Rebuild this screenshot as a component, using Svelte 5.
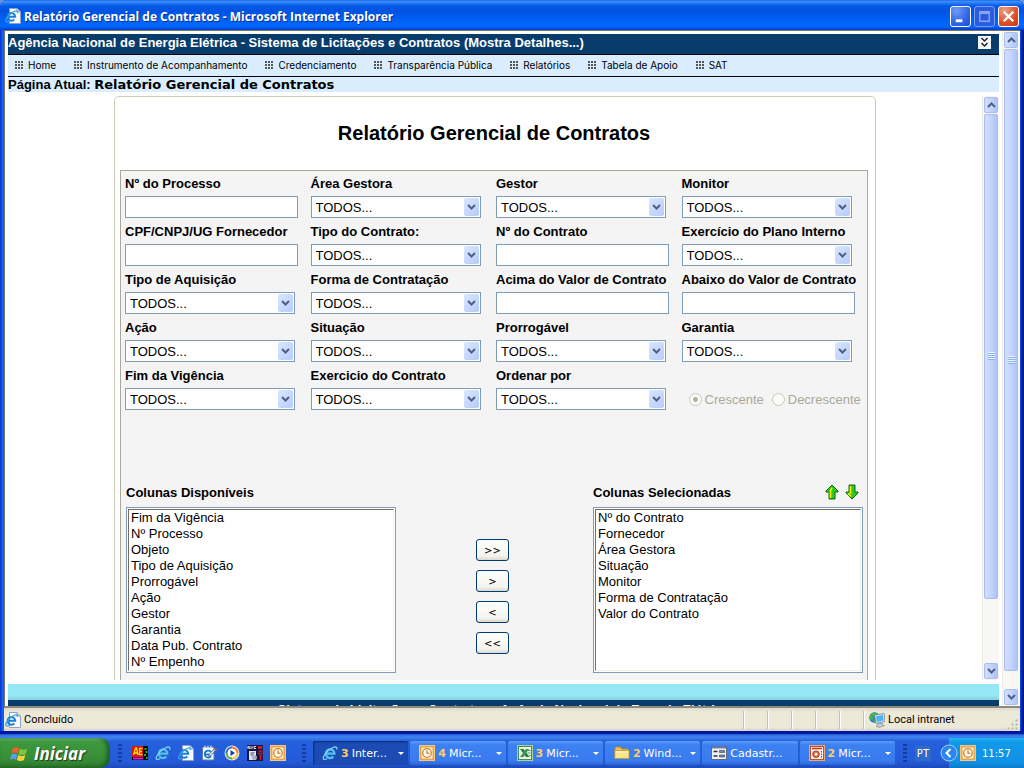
<script>
  const menu = ['Home', 'Instrumento de Acompanhamento', 'Credenciamento', 'Transparência Pública', 'Relatórios', 'Tabela de Apoio', 'SAT'];

  const fields = [
    { id: 'processo', label: 'Nº do Processo', type: 'text' },
    { id: 'area', label: 'Área Gestora', type: 'select' },
    { id: 'gestor', label: 'Gestor', type: 'select' },
    { id: 'monitor', label: 'Monitor', type: 'select' },
    { id: 'fornecedor', label: 'CPF/CNPJ/UG Fornecedor', type: 'text' },
    { id: 'tipo-contrato', label: 'Tipo do Contrato:', type: 'select' },
    { id: 'contrato', label: 'Nº do Contrato', type: 'text' },
    { id: 'exercicio-plano', label: 'Exercício do Plano Interno', type: 'select' },
    { id: 'tipo-aquisicao', label: 'Tipo de Aquisição', type: 'select' },
    { id: 'forma', label: 'Forma de Contratação', type: 'select' },
    { id: 'acima', label: 'Acima do Valor de Contrato', type: 'text' },
    { id: 'abaixo', label: 'Abaixo do Valor de Contrato', type: 'text' },
    { id: 'acao', label: 'Ação', type: 'select' },
    { id: 'situacao', label: 'Situação', type: 'select' },
    { id: 'prorrogavel', label: 'Prorrogável', type: 'select' },
    { id: 'garantia', label: 'Garantia', type: 'select' },
    { id: 'fim', label: 'Fim da Vigência', type: 'select' },
    { id: 'exercicio-contrato', label: 'Exercicio do Contrato', type: 'select' },
    { id: 'ordenar', label: 'Ordenar por', type: 'select' }
  ];

  const available = ['Fim da Vigência', 'Nº Processo', 'Objeto', 'Tipo de Aquisição', 'Prorrogável', 'Ação', 'Gestor', 'Garantia', 'Data Pub. Contrato', 'Nº Empenho'];
  const selected = ['Nº do Contrato', 'Fornecedor', 'Área Gestora', 'Situação', 'Monitor', 'Forma de Contratação', 'Valor do Contrato'];
  const moves = ['>>', '>', '<', '<<'];

  const quick = ['ae', 'ie', 'page', 'outlook', 'player', 'nic', 'clock'];
  const tasks = [
    { icon: 'ie', count: '3', text: 'Inter...', active: true },
    { icon: 'clock', count: '4', text: 'Micr...' },
    { icon: 'excel', count: '3', text: 'Micr...' },
    { icon: 'folder', count: '2', text: 'Wind...' },
    { icon: 'form', count: '', text: 'Cadastr...' },
    { icon: 'ppt', count: '2', text: 'Micr...' }
  ];
</script>

{#snippet icon(name)}
  <svg class="ico" viewBox="0 0 16 16" aria-hidden="true">
    {#if name === 'ie'}
      <path d="M4 8.600H12.400A4.300 4.300 0 1 0 11.400 11.500" fill="none" stroke="#1763b4" stroke-width="3.200" />
      <path d="M4 8.600H12.400A4.300 4.300 0 1 0 11.400 11.500" fill="none" stroke="#58bdf5" stroke-width="2.200" />
      <path d="M14.700 4.600c.9-2.800-1.200-3.300-4-1.900C6.600 4.700 2.600 8.900 1.400 12.200c-.8 2.600 1.200 2.900 3.800 1.400" fill="none" stroke="#86d8fc" stroke-width="1.200" />
    {:else if name === 'page'}
      <path d="M4.500.5H12l3.500 3.500v11.500h-11z" fill="#f7faff" stroke="#8f9fc0" />
      <path d="M12 .5V4h3.500" fill="#c9d8ee" stroke="#8f9fc0" />
      <path d="M2.800 8.800H10.200A3.800 3.800 0 1 0 9.300 11.300" fill="none" stroke="#1c7fd6" stroke-width="2" />
      <path d="M12.300 5c.8-2-.8-2.600-3.400-1.500C5.500 5.100 1.600 9.200.8 12c-.5 2.200 1 2.500 3.200 1.200" fill="none" stroke="#3aa2ea" stroke-width="1.200" />
    {:else if name === 'ae'}
      <rect y="1" width="16" height="14" fill="#000" />
      <rect y="1" width="11" height="11" fill="#e01010" />
      <path d="M1.500 10l2-7h1l1.500 7M2.300 8h3M10.500 3.500h-3v6h3M7.500 6.500h2.500" fill="none" stroke="#ffe600" stroke-width="1.300" />
      <path d="M1 13.500h10" stroke="#e020d0" stroke-width="2" />
      <path d="M12.500 3h2v2h-2zM13.500 6h2v2h-2zM12 9h2v2h-2zM14 12h1.500v2H14z" fill="#18b818" />
    {:else if name === 'outlook'}
      <rect x="1.500" y="2" width="11.500" height="13" rx="1" fill="#f3f9ff" stroke="#5f7fa8" />
      <path d="M4 .5v3M7 .5v3M10 .5v3" stroke="#cfe0f5" />
      <path d="M10 7a3.500 3.500 0 1 0 0 4.200M4.500 9.300h4" fill="none" stroke="#147ac8" stroke-width="1.800" />
      <path d="M8 9.500l5-5.500 1.500 1-4.500 5.500-2.500.8z" fill="#e8f3ff" stroke="#24496f" stroke-width=".7" />
      <path d="M13 3l3 1.200-1.500 2.300z" fill="#e4622b" />
    {:else if name === 'player'}
      <circle cx="8" cy="8" r="7.500" fill="#dfe5ee" />
      <path d="M8 1.500A6.500 6.500 0 0 0 1.500 8H8z" fill="#3170d4" />
      <path d="M8 1.500A6.500 6.500 0 0 1 14.500 8H8z" fill="#f07b25" />
      <path d="M14.500 8A6.500 6.500 0 0 1 8 14.500V8z" fill="#ecc43c" />
      <path d="M1.500 8A6.500 6.500 0 0 0 8 14.500V8z" fill="#54aa3c" />
      <circle cx="8" cy="8" r="4.500" fill="#fff" />
      <path d="M6.500 5l4.500 3-4.500 3z" fill="#173e9a" />
    {:else if name === 'nic'}
      <rect width="16" height="16" fill="#1a1445" />
      <path d="M1 4V1l2 3V1M5 1v3M9 1.500H7v2h2" fill="none" stroke="#f4f4f4" stroke-width=".9" />
      <path d="M11 1l1 3 1-3 1 3 1-3M12 6h3v3h-3zM12 11h3M13.500 11v4" fill="none" stroke="#e32020" />
      <rect x="2" y="6" width="7" height="9" fill="#e3e6ec" />
      <path d="M3.500 8h4M3.500 10h3" stroke="#454c66" />
      <circle cx="7.500" cy="12.500" r="2.500" fill="#a4aebd" />
    {:else if name === 'clock'}
      <rect x=".5" y=".5" width="15" height="15" fill="#eaa446" stroke="#f7c77e" />
      <rect x="2.500" y="2.500" width="11" height="11" fill="#fff3d6" />
      <circle cx="8" cy="8" r="4.300" fill="#fffaf0" stroke="#cf842c" stroke-width="1.300" />
      <path d="M8 5.300V8.300h2.500" fill="none" stroke="#ba6a1c" stroke-width="1.100" />
    {:else if name === 'excel'}
      <rect x=".5" y=".5" width="15" height="15" fill="#3d8e50" stroke="#a6d3a0" />
      <rect x="2" y="2" width="12" height="12" fill="#e9f5e3" />
      <path d="M3 4h3.500l6 8H9z" fill="#2a7c3d" />
      <path d="M12 4H9l-6 8h3.500z" fill="#3f9550" />
      <path d="M10.500 8h3M11 5.500h2.500M12 10.500h1.500" stroke="#2a7c3d" stroke-width=".8" />
    {:else if name === 'folder'}
      <path d="M1 3.500l1-1.500h4.500l1.500 2H14v3H1z" fill="#f0c04a" stroke="#b98819" stroke-width=".8" />
      <path d="M.8 13.500V5.500H15v8z" fill="#fde58a" stroke="#c29a2e" stroke-width=".8" />
      <path d="M2 7h12" stroke="#fff8cf" />
    {:else if name === 'form'}
      <rect x=".5" y="1.500" width="15" height="13" fill="#eef0f2" stroke="#5c6a80" />
      <path d="M1 2.500h14" stroke="#6a7fae" stroke-width="2" />
      <path d="M2.500 6.500h4M2.500 11h4" stroke="#333" stroke-width="1.300" />
      <path d="M8.500 5.500h5v2h-5zM8.500 10h5v2h-5z" fill="#7b8ba6" stroke="#30394a" stroke-width=".6" />
    {:else if name === 'ppt'}
      <rect x=".5" y=".5" width="15" height="15" fill="#c44c26" stroke="#efa37f" />
      <rect x="2" y="2" width="12" height="12" fill="#fff0e8" />
      <path d="M3 3.500h10" stroke="#b83a1b" stroke-width="1.500" />
      <circle cx="7" cy="9.200" r="3.300" fill="#e37750" stroke="#8e2b12" stroke-width=".8" />
      <circle cx="7" cy="9.200" r="1.200" fill="#fff" />
      <path d="M12.500 6v7" stroke="#b83a1b" stroke-dasharray="1.500 1" />
    {:else if name === 'net'}
      <circle cx="5.500" cy="5.500" r="5.300" fill="#2f83d2" />
      <path d="M2 2c2-2 5-1.800 6-.5L6.500 4 4 4.500 3.500 8 1 7C0 5 1 3 2 2zM5 7l3 .5-1 3-2-.5z" fill="#49b64a" />
      <path d="M5.500 3l9.500-1.500 1 8-9 2z" fill="#dfe5ec" stroke="#62748c" stroke-width=".7" />
      <path d="M7 4.300l6.800-1.200.7 5.400-6.700 1.500z" fill="#4ab5f2" />
      <path d="M9 12l4-1 .5 2 2 .5-5.500 2-3-1.200z" fill="#c3ccd7" stroke="#62748c" stroke-width=".5" />
    {/if}
  </svg>
{/snippet}

{#snippet chevron(dir)}
  <svg class="chev" viewBox="0 0 9 6" aria-hidden="true">
    <path d={dir === 'up' ? 'M1 5l3.500-3.500L8 5' : 'M1 1l3.500 3.500L8 1'} fill="none" stroke="#4d6185" stroke-width="2" />
  </svg>
{/snippet}

{#snippet scrollbar(kind)}
  <div class="scroll {kind}">
    <button class="sbtn" aria-label="Rolar para cima">{@render chevron('up')}</button>
    <div class="thumb"><i class="grip"></i></div>
    <div class="rest"></div>
    <button class="sbtn" aria-label="Rolar para baixo">{@render chevron('down')}</button>
  </div>
{/snippet}

<div class="desktop">
  <div class="window">
    <header class="titlebar">
      {@render icon('page')}
      <span class="caption">Relatório Gerencial de Contratos - Microsoft Internet Explorer</span>
      <button class="wbtn" aria-label="Minimizar"><svg viewBox="0 0 20 20"><path d="M5 14.500h7" stroke="#fff" stroke-width="3" /></svg></button>
      <button class="wbtn off" aria-label="Maximizar"><svg viewBox="0 0 20 20"><path d="M5 6.500h10M5 5h10v10H5z" fill="none" stroke="#8ba4ee" stroke-width="1.500" /></svg></button>
      <button class="wbtn close" aria-label="Fechar"><svg viewBox="0 0 20 20"><path d="M5 5l10 10M15 5L5 15" stroke="#fff" stroke-width="2.500" /></svg></button>
    </header>

    <div class="client">
      <div class="page">
        <div class="banner">
          <span>Agência Nacional de Energia Elétrica - Sistema de Licitações e Contratos (Mostra Detalhes...)</span>
          <button class="expand" aria-label="Mostrar detalhes">
            <svg viewBox="0 0 13 13"><path d="M3.500 2l3 3 3-3M3.500 7l3 3 3-3" fill="none" stroke="#222" stroke-width="1.500" /></svg>
          </button>
        </div>
        <nav class="menu">
          {#each menu as item}
            <a href="#top">
              <svg class="dots" viewBox="0 0 9 9" aria-hidden="true">
                <path d="M0 1h9M0 4h9M0 7h9" stroke="#555" stroke-width="2" stroke-dasharray="2 1" />
              </svg>{item}</a>
          {/each}
        </nav>
        <div class="path"><b>Página Atual:</b> <strong>Relatório Gerencial de Contratos</strong></div>

        <div class="viewport">
          <main class="content">
            <div class="panel">
              <h1>Relatório Gerencial de Contratos</h1>
              <form class="box">
                <div class="grid">
                  {#each fields as f}
                    <div class="field">
                      <label for={f.id}>{f.label}</label>
                      {#if f.type === 'text'}
                        <input id={f.id} type="text" />
                      {:else}
                        <div class="combo">
                          <select id={f.id}><option>TODOS...</option></select>
                          <span class="drop">{@render chevron('down')}</span>
                        </div>
                      {/if}
                    </div>
                  {/each}
                  <div class="radios">
                    <label><input type="radio" name="ordem" checked disabled />Crescente</label>
                    <label><input type="radio" name="ordem" disabled />Decrescente</label>
                  </div>
                </div>

                <div class="picker">
                  <div class="side">
                    <div class="head"><label for="disp">Colunas Disponíveis</label></div>
                    <div class="list">
                      <select id="disp" multiple size="10">
                        {#each available as o}<option>{o}</option>{/each}
                      </select>
                    </div>
                  </div>
                  <div class="moves">
                    {#each moves as m}<button type="button">{m}</button>{/each}
                  </div>
                  <div class="side">
                    <div class="head">
                      <label for="sel">Colunas Selecionadas</label>
                      <button type="button" class="arrow" aria-label="Mover para cima">
                        <svg viewBox="0 0 14 16"><path d="M7 1l6 6v1H10v7H4V8H1V7z" fill="#2fc81e" stroke="#0b6a10" /><path d="M5.500 14V6.500L7 4" fill="none" stroke="#f2f500" stroke-width="1.500" /></svg>
                      </button>
                      <button type="button" class="arrow" aria-label="Mover para baixo">
                        <svg viewBox="0 0 14 16"><path d="M4 1h6v7h3v1l-6 6-6-6V8h3z" fill="#2fc81e" stroke="#0b6a10" /><path d="M5.500 2v8M3 9.500l3 3" fill="none" stroke="#f2f500" stroke-width="1.500" /></svg>
                      </button>
                    </div>
                    <div class="list">
                      <select id="sel" multiple size="10">
                        {#each selected as o}<option>{o}</option>{/each}
                      </select>
                    </div>
                  </div>
                </div>
              </form>
            </div>
          </main>
          {@render scrollbar('inner')}
        </div>

        <div class="band"></div>
        <footer class="foot">Sistema de Licitações e Contratos - Agência Nacional de Energia Elétrica</footer>
      </div>
      {@render scrollbar('outer')}
    </div>

    <div class="status">
      {@render icon('page')}
      <span class="msg">Concluído</span>
      {#each [1, 2, 3, 4, 5] as n}<i class="cell"></i>{/each}
      <span class="zone">{@render icon('net')}Local intranet</span>
      <svg class="resize" viewBox="0 0 12 12" aria-hidden="true"><path d="M8 0h3v3H8zM4 4h3v3H4zM8 4h3v3H8zM0 8h3v3H0zM4 8h3v3H4zM8 8h3v3H8z" fill="#b8b4a2" stroke="#ece9d8" /></svg>
    </div>
  </div>

  <div class="taskbar">
    <button class="start">
      <svg viewBox="0 0 20 18" aria-hidden="true">
        <path d="M3 3.500c2.500-1.500 4.500-1.300 6.500 0L8 9C6 7.800 4 7.700 1.500 9z" fill="#f0602a" />
        <path d="M10.500 4c2.500 1.400 4.600 1.400 7.500 0l-1.500 5.500c-2.700 1.300-4.800 1.200-7.500 0z" fill="#82c83c" />
        <path d="M1.200 10.200c2.500-1.300 4.500-1.200 6.500 0L6.200 15.500c-2-1.200-4-1.300-6.200 0z" fill="#5a9cf2" />
        <path d="M8.700 10.700c2.600 1.300 4.700 1.300 7.500 0L14.700 16c-2.800 1.300-5 1.200-7.500 0z" fill="#fcd03c" />
      </svg>
      Iniciar
    </button>
    <i class="sep"></i>
    <div class="quick">
      {#each quick as q}<button aria-label="Atalho {q}">{@render icon(q)}</button>{/each}
    </div>
    <i class="sep"></i>
    <div class="tasks">
      {#each tasks as t}
        <button class="task" class:active={t.active}>
          {@render icon(t.icon)}
          {#if t.count}<b>{t.count}</b>{/if}
          <span>{t.text}</span>
          {#if t.count}<i class="caret"></i>{/if}
        </button>
      {/each}
    </div>
    <i class="sep"></i>
    <span class="lang">PT</span>
    <div class="tray">
      <button class="hide" aria-label="Ocultar ícones">
        <svg viewBox="0 0 18 18"><circle cx="9" cy="9" r="8" fill="#2a86ee" stroke="#9cd0fb" /><path d="M10.500 5l-4 4 4 4" fill="none" stroke="#fff" stroke-width="2" /></svg>
      </button>
      {@render icon('clock')}
      <time>11:57</time>
    </div>
  </div>
</div>

<style>
  :global(body) { margin: 0; }
  * { box-sizing: border-box; }
  button { padding: 0; border: 0; background: none; font: inherit; color: inherit; }
  svg { display: block; }
  .ico { width: 16px; height: 16px; flex: none; }

  .desktop {
    display: flex; flex-direction: column; height: 100vh; overflow: hidden;
    background: #6a8fdb; color: #000;
    font-family: "Liberation Sans", Arial, sans-serif; font-size: 13px;
  }
  .window {
    flex: 1; min-height: 0; display: flex; flex-direction: column;
    padding: 0 4px 3px; border-radius: 7px 7px 0 0;
    background: linear-gradient(90deg, #0831d9, #166aee 3px, #0855dd 4px, #0855dd calc(100% - 4px), #001ea0 calc(100% - 2px), #001590);
    box-shadow: inset 0 -3px #0016a6;
  }
  .titlebar {
    flex: none; height: 30px; margin: 0 -4px; padding: 2px 5px 0; display: flex; align-items: center; gap: 3px;
    border-radius: 7px 7px 0 0;
    background: linear-gradient(#0a58e6 0, #3f92ff 1px, #2a7df5 3px, #0458e6 6px, #0053e1 12px, #0062fa 20px, #0066ff 26px, #0057ea 28px, #003dc6 30px);
  }
  .caption { flex: 1; color: #fff; font: 700 12px "Open Sans", sans-serif; text-shadow: 1px 1px #0a2f8f; white-space: nowrap; }
  .wbtn {
    width: 21px; height: 21px; border: 1px solid #fff; border-radius: 3px;
    background: radial-gradient(circle at 30% 20%, #6f9bf5, #2f64e4 60%, #1b4ed0);
  }
  .wbtn.off { border-color: #7b9cf0; background: #2a5ce0; }
  .wbtn.close { background: radial-gradient(circle at 30% 20%, #f0a084, #e04c24 60%, #c83a12); }
  .wbtn svg { width: 19px; height: 19px; }

  .client {
    flex: 1; min-height: 0; display: flex; background: #fff;
    border: 1px solid #7a7666; border-right: 0; border-bottom: 0; padding: 3px 1px 0 3px;
  }
  .page { flex: 1; min-width: 0; display: flex; flex-direction: column; margin-right: 3px; }
  .banner {
    flex: none; height: 21px; display: flex; align-items: center; justify-content: space-between;
    padding-right: 8px; padding-bottom: 3px; background: #083c6b; border-bottom: 1px solid #000;
    color: #fff; font-size: 13px; font-weight: 700; white-space: nowrap;
  }
  .expand { width: 13px; height: 13px; background: #f4f8fa; }
  .menu {
    flex: none; height: 22px; display: flex; align-items: center; gap: 18px; padding: 0 0 1px 7px;
    background: #d9edff; border-bottom: 1px solid #000; font: 10px "Inter", sans-serif;
  }
  .menu a { display: flex; align-items: center; gap: 4px; color: #000; text-decoration: none; white-space: nowrap; }
  .dots { width: 9px; height: 9px; }
  .path { flex: none; height: 15px; line-height: 15px; background: #d9edff; white-space: nowrap; }
  .path strong { font: 700 13px/15px "DejaVu Sans", sans-serif; }

  .viewport { flex: 1; min-height: 0; display: flex; padding: 4px 0; }
  .content { flex: 1; min-width: 0; overflow: hidden; }
  .panel { max-width: 762px; min-height: 100%; margin: 0 auto; padding: 0 7px 8px 5px; border: 1px solid #cccbb9; border-radius: 5px 5px 0 0; }
  h1 { margin: 0; padding: 25px 0; font-size: 20px; line-height: 23px; text-align: center; }
  .box { border: 1px solid #aca899; background: #f4f4f4; padding: 0 0 40px 4px; }
  .grid { display: grid; grid-template-columns: repeat(4, 1fr); }
  .field { height: 48px; white-space: nowrap; }
  label { font-weight: 700; }
  .field label { display: block; height: 25px; line-height: 25px; }
  .field input { display: block; width: 173px; height: 22px; border: 1px solid #7f9db9; background: #fff; padding: 0 4px; font: inherit; }
  .combo { position: relative; width: 170px; }
  .combo select {
    appearance: none; display: block; width: 100%; height: 22px; padding: 0 4px; margin: 0;
    border: 1px solid #7f9db9; border-radius: 0; background: #fff; color: #000; font: 13px "Liberation Sans", sans-serif;
  }
  .drop {
    position: absolute; top: 2px; right: 2px; bottom: 2px; width: 15px; pointer-events: none;
    display: grid; place-items: center; border-radius: 2px;
    background: linear-gradient(135deg, #dbe6ff, #b6cbfa);
  }
  .chev { width: 9px; height: 6px; }
  .radios { display: flex; gap: 8px; align-items: flex-end; height: 48px; padding: 0 0 4px 7px; white-space: nowrap; }
  .radios label { display: flex; align-items: center; gap: 3px; font-weight: 400; color: #aca899; }
  .radios input {
    appearance: none; width: 13px; height: 13px; margin: 0; border: 1px solid #cac8bb; border-radius: 50%; background: #fbfbf8;
  }
  .radios input:checked { background: radial-gradient(circle, #b5b2a4 2px, #fbfbf8 3px); }

  .picker { display: flex; justify-content: space-between; padding: 68px 4px 0 1px; }
  .side { width: 270px; }
  .head { display: flex; align-items: center; height: 26px; gap: 6px; margin-bottom: 2px; padding-right: 4px; }
  .head label { flex: 1; }
  .arrow { width: 14px; height: 16px; }
  .arrow svg { width: 14px; height: 16px; }
  .list { border: 1px solid #7f9db9; background: #fff; padding: 1px; }
  .list select {
    display: block; width: 100%; height: 162px; margin: 0; padding: 0; overflow: hidden; outline: 0;
    border: 1px solid; border-color: #716f64 #f1efe2 #f1efe2 #716f64; border-radius: 0; background: #fff; font: 13px "Liberation Sans", sans-serif;
  }
  .list option { height: 16px; min-height: 16px; padding: 0 2px; line-height: 16px; }
  .moves { display: flex; flex-direction: column; gap: 9px; padding: 60px 4px 0 0; }
  .moves button {
    width: 33px; height: 22px; border: 1px solid #003c74; border-radius: 3px;
    background: linear-gradient(#fff, #f4f3ee 80%, #dcd8cc); font: 10px "DejaVu Sans", sans-serif;
  }

  .scroll { flex: none; width: 17px; display: flex; flex-direction: column; gap: 1px; padding: 1px; background: #f8f7f3; border-left: 1px solid #eeede5; }
  .sbtn, .thumb { border: 1px solid #a9bdf0; border-radius: 2px; background: linear-gradient(90deg, #d3dffd, #c0d1fc 60%, #adc4f8); }
  .sbtn { flex: none; height: 16px; display: grid; place-items: center; }
  .thumb { flex: 624; display: grid; place-items: center; }
  .inner .thumb { flex: 487; }
  .rest { flex: 16; }
  .inner .rest { flex: 63; }
  .grip { width: 7px; height: 8px; background: repeating-linear-gradient(#eef4fe 0 1px, #8cb0f8 1px 2px); }
  .outer { margin-top: -3px; }

  .band { flex: none; height: 16px; background: linear-gradient(#93e6f3, #96e9f6 70%, #86cfda); }
  .foot { flex: none; height: 6px; overflow: hidden; padding-top: 2px; background: #083c6b; color: #fff; font-size: 13px; font-weight: 700; line-height: 15px; text-align: center; white-space: nowrap; }

  .status {
    flex: none; height: 25px; display: flex; align-items: center; padding: 0 1px; border-top: 2px solid #8c8a7e;
    background: linear-gradient(#dedbcb, #ece9d8 4px, #ece9d8 19px, #d8d5c5); font: 11px "Roboto", sans-serif;
  }
  .msg { flex: 1; padding-left: 3px; }
  .cell { width: 24px; height: 18px; border-left: 1px solid #c5c2b2; box-shadow: inset 1px 0 #fff; }
  .zone { width: 144px; display: flex; align-items: center; gap: 3px; padding-left: 5px; height: 18px; border-left: 1px solid #c5c2b2; box-shadow: inset 1px 0 #fff; }
  .resize { width: 12px; height: 12px; align-self: flex-end; }

  .taskbar {
    flex: none; height: 34px; display: flex; align-items: stretch; padding-top: 4px; color: #fff;
    font: 11px "DejaVu Sans", sans-serif;
    background: linear-gradient(#1c50c0 0, #3c81f0 2px, #3a7cec 4px, #2560dd 7px, #245ad8 28px, #1d49b8 34px);
  }
  .start {
    width: 110px; display: flex; align-items: center; gap: 5px; padding-left: 10px; border-radius: 0 10px 10px 0;
    background: linear-gradient(#6cb56b 0, #3d983d 4px, #388e38 20px, #2f7c2f); box-shadow: inset -3px -1px 4px #1d5c22;
    font: italic 700 17px "Open Sans", sans-serif; text-shadow: 1px 1px 1px #1a3d1a;
  }
  .start svg { width: 19px; height: 17px; }
  .sep { flex: none; width: 4px; margin: 6px 8px 4px; background: repeating-linear-gradient(#143c9e 0 2px, transparent 2px 4px); }
  .quick { display: flex; gap: 7px; align-items: center; padding-left: 2px; width: 164px; }
  .tasks { flex: 1; min-width: 0; display: grid; grid-template-columns: repeat(6, 1fr); gap: 2px; padding: 3px 0; margin-left: -1px; }
  .task {
    min-width: 0; display: flex; align-items: center; gap: 3px; padding: 0 4px 0 9px; border-radius: 2px; white-space: nowrap;
    background: linear-gradient(#5d9bfb, #3c81f3 4px, #3a7bee 20px, #2b65d6);
  }
  .task b { color: #ffcc66; }
  .task span { flex: 1; text-align: left; }
  .task.active { background: #1b4bb3; box-shadow: inset 1px 1px 2px #0c2c78; }
  .caret { border: 3px solid transparent; border-top-color: #fff; border-bottom: 0; }
  .lang { align-self: center; padding: 2px 2px; margin-right: 18px; background: #316ac5; font-size: 10px; }
  .tray { display: flex; align-items: center; gap: 2px; width: 75px; background: linear-gradient(#19b9f3, #1299ea 4px, #0f91e6 24px, #0d7ac8); }
  .hide { width: 18px; height: 18px; margin-left: -9px; }
  .tray time { padding-left: 4px; font-size: 10px; }
</style>
